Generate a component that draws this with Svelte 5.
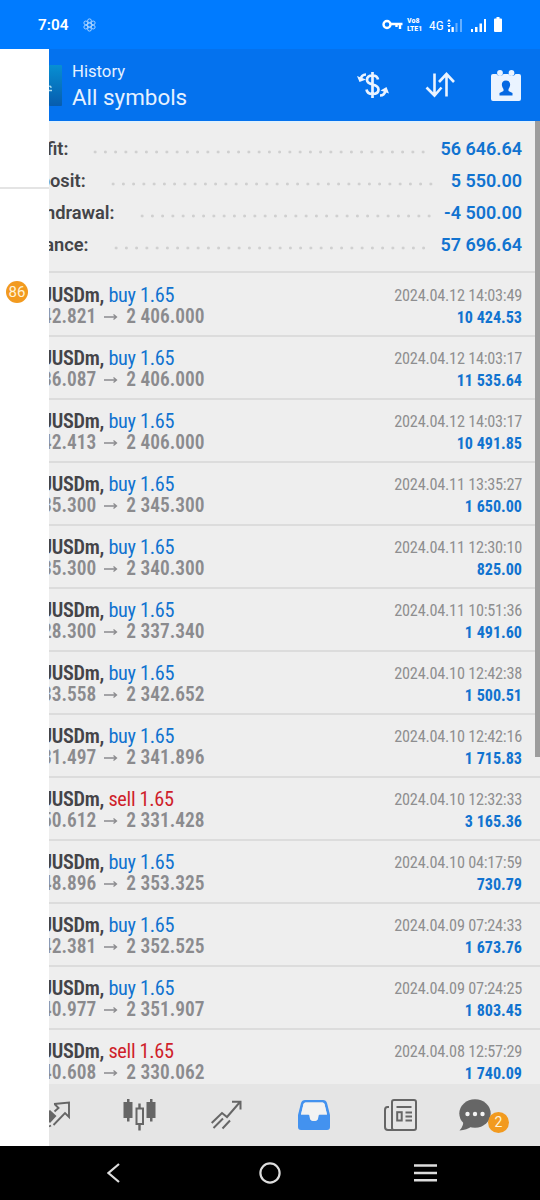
<script lang="ts">
    type Deal = {
        side: 'buy' | 'sell';
        open: string;
        close: string;
        time: string;
        profit: string;
    };

    const summary = [
        { label: 'Profit:', value: '56 646.64' },
        { label: 'Deposit:', value: '5 550.00' },
        { label: 'Withdrawal:', value: '-4 500.00' },
        { label: 'Balance:', value: '57 696.64' },
    ];

    const deals: Deal[] = [
        { side: 'buy', open: '2 342.821', close: '2 406.000', time: '2024.04.12 14:03:49', profit: '10 424.53' },
        { side: 'buy', open: '2 336.087', close: '2 406.000', time: '2024.04.12 14:03:17', profit: '11 535.64' },
        { side: 'buy', open: '2 342.413', close: '2 406.000', time: '2024.04.12 14:03:17', profit: '10 491.85' },
        { side: 'buy', open: '2 335.300', close: '2 345.300', time: '2024.04.11 13:35:27', profit: '1 650.00' },
        { side: 'buy', open: '2 335.300', close: '2 340.300', time: '2024.04.11 12:30:10', profit: '825.00' },
        { side: 'buy', open: '2 328.300', close: '2 337.340', time: '2024.04.11 10:51:36', profit: '1 491.60' },
        { side: 'buy', open: '2 333.558', close: '2 342.652', time: '2024.04.10 12:42:38', profit: '1 500.51' },
        { side: 'buy', open: '2 331.497', close: '2 341.896', time: '2024.04.10 12:42:16', profit: '1 715.83' },
        { side: 'sell', open: '2 350.612', close: '2 331.428', time: '2024.04.10 12:32:33', profit: '3 165.36' },
        { side: 'buy', open: '2 348.896', close: '2 353.325', time: '2024.04.10 04:17:59', profit: '730.79' },
        { side: 'buy', open: '2 342.381', close: '2 352.525', time: '2024.04.09 07:24:33', profit: '1 673.76' },
        { side: 'buy', open: '2 340.977', close: '2 351.907', time: '2024.04.09 07:24:25', profit: '1 803.45' },
        { side: 'sell', open: '2 340.608', close: '2 330.062', time: '2024.04.08 12:57:29', profit: '1 740.09' },
    ];
</script>

<div class="phone">
    <div class="status">
        <span class="clock">7:04</span>
        <svg class="gear" width="13" height="14" viewBox="0 0 13 14" fill="none" stroke="#a9d3ff" stroke-width="1">
            <circle cx="6.5" cy="7" r="2" />
            <circle cx="6.5" cy="2.8" r="1.9" /><circle cx="10.2" cy="4.9" r="1.9" /><circle cx="10.2" cy="9.1" r="1.9" />
            <circle cx="6.5" cy="11.2" r="1.9" /><circle cx="2.8" cy="9.1" r="1.9" /><circle cx="2.8" cy="4.9" r="1.9" />
        </svg>
        <svg class="key" width="21" height="11" viewBox="0 0 21 11" fill="none" stroke="#fff">
            <circle cx="5" cy="5.5" r="3.5" stroke-width="2.4" />
            <path d="M8.5 5H20.5M18 5v5M14.5 5v3" stroke-width="2.4" />
        </svg>
        <span class="volte"><span>Vo8</span><span>LTE1</span></span>
        <span class="net">4G</span>
        <svg class="sim1" width="16" height="14" viewBox="0 0 16 14" fill="#fff">
            <path d="M0 3.5L2 1l2 2.5zM1 5h2v1H1zM0 7h4L2 9.5zM1 11h2v3H1zM4.500 9h2.300v5H4.500z" />
            <path d="M8.500 5h2v9h-2zM13 1h2v13h-2z" opacity=".4" />
        </svg>
        <svg class="sim2" width="16" height="14" viewBox="0 0 16 14" fill="#fff">
            <path d="M0 11h2v3H0zM4 9h2.500v5H4zM8.500 5.500H11V14H8.500zM13 1h2v13h-2z" />
        </svg>
        <svg class="battery" width="8" height="15" viewBox="0 0 8 15" fill="#fff">
            <path d="M2.500 0h3v1.500H7a1 1 0 0 1 1 1V14a1 1 0 0 1-1 1H1a1 1 0 0 1-1-1V2.500a1 1 0 0 1 1-1h1.500z" />
        </svg>
    </div>

    <div class="screen">
        <aside class="drawer">
            <div class="drawer-head"></div>
            <span class="badge count">86</span>
        </aside>

        <main class="pane">
            <header class="bar">
                <svg class="thumb" width="13" height="41" viewBox="0 0 13 41">
                    <defs>
                        <linearGradient id="sea" x1="0" y1="0" x2="0" y2="1">
                            <stop offset="0" stop-color="#078fd2" />
                            <stop offset="1" stop-color="#075cae" />
                        </linearGradient>
                    </defs>
                    <rect width="13" height="41" rx="1" fill="url(#sea)" />
                    <path d="M0 21.500q2-1 2 1.500M0 25.500h3" fill="none" stroke="#a8dcf0" stroke-width="1.300" />
                </svg>
                <div class="titles">
                    <span class="sub">History</span>
                    <span class="title">All symbols</span>
                </div>
                <div class="actions">
                    <svg width="32" height="30" viewBox="0 0 32 30" fill="none" stroke="#eaf3ff" stroke-width="2.700">
                        <path d="M21 9.500C20.500 6.500 18.500 5.500 15.500 5.500S10 7 10 10c0 6 11.500 3 11.500 9.500 0 3-2.500 4.500-6 4.500s-5.500-1.500-6-4.500M15.500 2v26" />
                        <path d="M9 4.500C6 4.500 4 6 3.500 10M23 25.500c3 0 5-2 5.500-5" />
                        <path d="M0 6l2.500 6L9 9.500zM23.500 20.500l6-3.500 2.500 6.500z" fill="#eaf3ff" stroke="none" />
                    </svg>
                    <svg width="30" height="26" viewBox="0 0 30 26" fill="none" stroke="#eaf3ff" stroke-width="2.600">
                        <path d="M9.500 1.500v22M1.500 15.500l8 8 7-8M21.500 24.500V3M14 10l7.500-8 7.500 8" />
                    </svg>
                    <svg width="30" height="31" viewBox="0 0 30 31">
                        <path d="M0 6q0-2 2-2h3.500a4 4 0 0 0 7 0h5a4 4 0 0 0 7 0H28q2 0 2 2v23q0 2-2 2H2q-2 0-2-2z" fill="#eaf3ff" />
                        <circle cx="9" cy="3" r="2.900" fill="#eaf3ff" />
                        <circle cx="20.500" cy="3" r="2.900" fill="#eaf3ff" />
                        <path d="M15 10.500c5 0 5 5.500 2.500 8.500v2l4 2v2.500h-13V23l4-2v-2c-2.500-3-2.500-8.500 2.500-8.500z" fill="#0568e2" />
                    </svg>
                </div>
            </header>

            <div class="history">
                <section class="summary">
                    {#each summary as row}
                        <div class="total">
                            <span class="label">{row.label}</span>
                            <span class="dots"></span>
                            <span class="amount">{row.value}</span>
                        </div>
                    {/each}
                </section>

                {#each deals as deal}
                    <div class="deal">
                        <div class="left">
                            <div class="symbol">XAUUSDm, <span class={deal.side}>{deal.side} 1.65</span></div>
                            <div class="prices">{deal.open} <svg width="14" height="8" viewBox="0 0 14 8"><path d="M0 4h12M9.500 1.500L12.500 4 9.500 6.500" fill="none" stroke="#8b8b8e" stroke-width="1.300" /></svg> {deal.close}</div>
                        </div>
                        <div class="right">
                            <div class="time">{deal.time}</div>
                            <div class="profit">{deal.profit}</div>
                        </div>
                    </div>
                {/each}
                <div class="scrollbar"></div>
            </div>

            <nav class="tabs">
                <svg class="quotes" width="22" height="30" viewBox="0 0 22 30" fill="none" stroke="#666" stroke-width="1.900">
                    <path d="M-6 16l7-6 6.500 6-6.500 7z" fill="#666" stroke="none" />
                    <path d="M5 4L20 2.500V17L16 13 4.500 25M5.500 4l4 4-4 3.500M0 26.500l2-1" />
                </svg>
                <svg class="candles" width="33" height="32" viewBox="0 0 33 32" fill="#666">
                    <path d="M4 0h2.500v3H9.500v16H6.500v3.500H4V19H0.500V3H4zM27 0h2.500v3h3v16h-3v3.500H27V19h-3.500V3H27z" />
                    <path d="M15.300 4.500h2.400v4.500h-2.400zM15.300 25h2.400v6.500h-2.400z" />
                    <rect x="13.500" y="9.500" width="6.500" height="15.500" fill="none" stroke="#666" stroke-width="2" />
                </svg>
                <svg class="trade" width="31" height="30" viewBox="0 0 31 30" fill="none" stroke="#666" stroke-width="2">
                    <path d="M0.700 23L11 13l5 4L29 2M21 1.700h8.500V9.500M2.500 28L12 18.500M11.500 28.500L19 20.500" />
                </svg>
                <svg class="inbox" width="32" height="30" viewBox="0 0 32 30">
                    <path fill-rule="evenodd" d="M7 0h18q3 0 4 3l3 12v12q0 3-3 3H3q-3 0-3-3V15L3 3q1-3 4-3zM7.500 2.500q-1.500 0-2 1.500L3 14.500h7.500q1.200 0 1.200 2 0 4.500 4.300 4.500t4.300-4.500q0-2 1.200-2H29L26.500 4q-.5-1.500-2-1.500z" fill="#4392ef" />
                    <path d="M7.500 2.500q-1.500 0-2 1.500L3 14.500h7.500q1.200 0 1.200 2 0 4.500 4.300 4.500t4.300-4.500q0-2 1.200-2H29L26.500 4q-.5-1.500-2-1.500z" fill="#f2f2f2" />
                </svg>
                <svg class="news" width="33" height="32" viewBox="0 0 33 32" fill="none" stroke="#666" stroke-width="2">
                    <rect x="8" y="1" width="24" height="30" rx="2" />
                    <path d="M5 8H3.500Q1 8 1 11v17q0 3 3 3h6M12.500 8h15M21.500 13.500h6.500M21.500 17.500h6.500M21.500 21.500h6.500" />
                    <rect x="13.200" y="13.200" width="4.500" height="8.300" />
                </svg>
                <span class="chat">
                    <svg width="32" height="32" viewBox="0 0 32 32">
                        <path d="M4.500 20Q5 27 .5 31.500 8 31 12.500 27.500z" fill="#666" />
                        <ellipse cx="16" cy="14.500" rx="15.700" ry="14.300" fill="#666" />
                        <circle cx="8.500" cy="15" r="2.200" fill="#f4f4f4" />
                        <circle cx="16" cy="15" r="2.200" fill="#f4f4f4" />
                        <circle cx="23.500" cy="15" r="2.200" fill="#f4f4f4" />
                    </svg>
                    <span class="badge unread">2</span>
                </span>
            </nav>
        </main>
    </div>

    <div class="system">
        <svg width="13" height="20" viewBox="0 0 13 20" fill="none" stroke="#ddd" stroke-width="2.200"><path d="M12 1L1.500 10 12 19" /></svg>
        <svg width="22" height="22" viewBox="0 0 22 22" fill="none" stroke="#ddd" stroke-width="2.200"><circle cx="11" cy="11" r="9.600" /></svg>
        <svg width="23" height="18" viewBox="0 0 23 18" stroke="#ddd" stroke-width="2.500"><path d="M0 1.500h23M0 9h23M0 16.300h23" /></svg>
    </div>
</div>

<style>
    :global(body) {
        margin: 0;
        background: #000;
    }

    .phone {
        width: 540px;
        height: 1200px;
        display: flex;
        flex-direction: column;
        overflow: hidden;
        font-family: Roboto, "Liberation Sans", sans-serif;
    }

    svg {
        display: block;
        flex: none;
    }

    .status {
        height: 49px;
        box-sizing: border-box;
        display: flex;
        align-items: center;
        padding-left: 38px;
        background: #007bff;
        color: #fff;
    }

    .clock {
        width: 45px;
        font-size: 15.3px;
        font-weight: 600;
    }

    .key {
        margin-left: 286px;
    }

    .volte {
        width: 18px;
        margin-left: 4px;
        display: flex;
        flex-direction: column;
        font-size: 8px;
        line-height: 7.5px;
        font-weight: 700;
        font-stretch: 75%;
    }

    .net {
        width: 18px;
        margin-left: 4px;
        font-size: 13.5px;
        font-stretch: 75%;
    }

    .sim2 {
        margin-left: 8px;
    }

    .battery {
        margin-left: 7px;
    }

    .screen {
        height: 1097px;
        display: flex;
    }

    .drawer {
        width: 49px;
        background: #fff;
    }

    .drawer-head {
        height: 138px;
        border-bottom: 2px solid #e4e4e4;
    }

    .badge {
        display: flex;
        align-items: center;
        justify-content: center;
        border-radius: 50%;
        background: #f29a1f;
        color: #fff3d8;
    }

    .count {
        width: 22px;
        height: 22px;
        margin: 92px 0 0 6px;
        font-size: 15px;
    }

    .pane {
        width: 491px;
        display: flex;
        flex-direction: column;
        overflow: hidden;
    }

    .bar {
        height: 72px;
        display: flex;
        align-items: center;
        background: #0472ee;
        color: #e6f1ff;
    }

    .titles {
        margin: 4px 0 0 10px;
        display: flex;
        flex-direction: column;
    }

    .sub {
        font-size: 16.7px;
        line-height: 20px;
    }

    .title {
        font-size: 22.4px;
        line-height: 31px;
    }

    .actions {
        margin: 0 19px 0 auto;
        display: flex;
        align-items: center;
        gap: 36px;
    }

    .history {
        position: relative;
        height: 963px;
        overflow: hidden;
        background: #eeeeee;
    }

    .summary {
        height: 152px;
        box-sizing: border-box;
        padding: 9px 18px 0 0;
        margin-bottom: 1px;
        border-top: 2px solid #e2f0fa;
        border-bottom: 2px solid #dcdcdc;
    }

    .total {
        height: 32px;
        margin-left: -31px;
        display: flex;
        align-items: center;
        font-size: 18px;
        font-weight: 600;
    }

    .label {
        font-size: 18.3px;
        color: #444448;
    }

    .dots {
        flex: 1;
        height: 4px;
        margin: 7px 12px 0 22px;
        background: radial-gradient(circle, #cfcfcf 1px, transparent 1.9px) 0 0 / 10.25px 4px repeat-x;
    }

    .amount {
        color: #1173d0;
    }

    .deal {
        height: 63px;
        box-sizing: border-box;
        padding: 9px 18px 0 0;
        border-bottom: 2px solid #dcdcdc;
        display: flex;
        justify-content: space-between;
        font-stretch: 75%;
        white-space: nowrap;
    }

    .left {
        margin-left: -31px;
    }

    .symbol {
        font-size: 20.3px;
        letter-spacing: -0.3px;
        line-height: 24px;
        font-weight: 600;
        color: #444448;
    }

    .symbol span {
        font-weight: 400;
    }

    .symbol .buy {
        color: #1173d0;
    }

    .symbol .sell {
        color: #cf1f2b;
    }

    .prices {
        display: flex;
        align-items: center;
        gap: 8px;
        font-size: 19.4px;
        line-height: 20px;
        font-weight: 600;
        color: #8b8b8e;
    }

    .right {
        text-align: right;
    }

    .time {
        font-size: 16.3px;
        letter-spacing: -0.25px;
        line-height: 26px;
        color: #8e8e90;
    }

    .profit {
        font-size: 16.1px;
        line-height: 18px;
        font-weight: 700;
        color: #1173d0;
    }

    .scrollbar {
        position: absolute;
        top: 0;
        right: 0;
        width: 5px;
        height: 636px;
        background: #9d9d9d;
    }

    .tabs {
        height: 62px;
        box-sizing: border-box;
        padding-bottom: 1px;
        display: flex;
        align-items: center;
        background: #e5e5e5;
    }

    .candles {
        margin-left: 52px;
    }

    .trade {
        margin-left: 55px;
    }

    .inbox {
        margin-left: 56px;
    }

    .news {
        margin-left: 54px;
    }

    .chat {
        position: relative;
        margin-left: 42px;
    }

    .unread {
        position: absolute;
        left: 29px;
        top: 13px;
        width: 21px;
        height: 21px;
        font-size: 14px;
    }

    .system {
        flex: 1;
        box-sizing: border-box;
        padding-left: 107px;
        display: flex;
        align-items: center;
        background: #000;
    }

    .system svg + svg {
        margin-left: 139px;
    }

    .system svg:last-child {
        margin-left: 133px;
    }
</style>
